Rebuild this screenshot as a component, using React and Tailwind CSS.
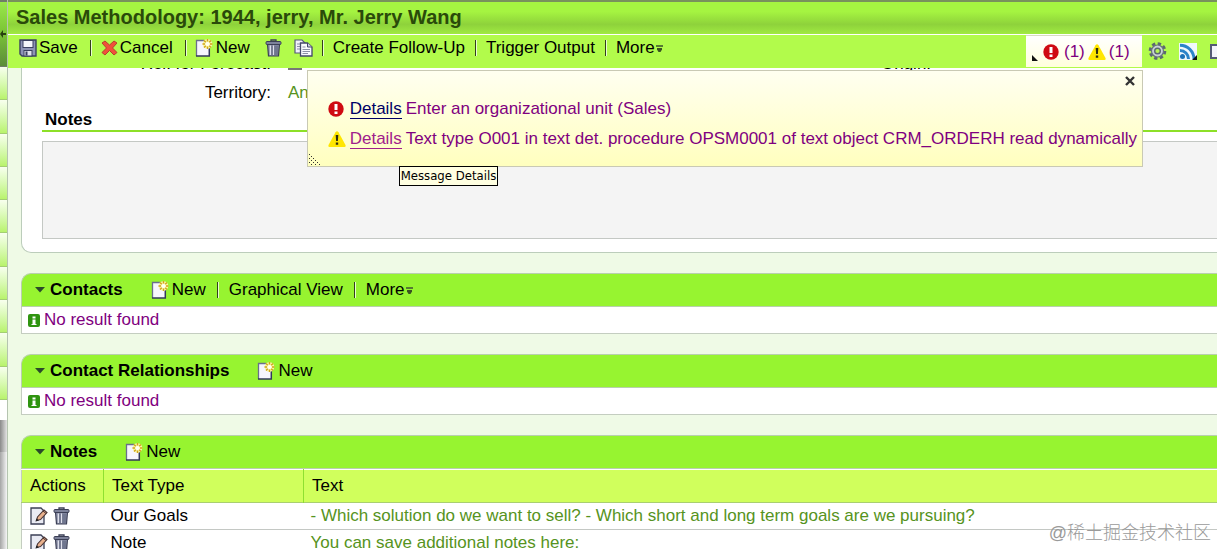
const SaveIcon = () => (
  <svg width="18" height="18" viewBox="0 0 18 18" aria-hidden="true">
    <path d="M1 1h16v16H3l-2-2z" fill="#8d93b5" stroke="#3b4160" strokeWidth="1.4" />
    <rect x="4" y="1.5" width="10" height="7" fill="#f4f5fa" stroke="#3b4160" />
    <rect x="5" y="11.5" width="8" height="5.5" fill="#e2e4ee" stroke="#3b4160" />
    <rect x="6.5" y="12.5" width="2" height="4" fill="#3b4160" />
  </svg>
);

const CancelIcon = () => (
  <svg width="17" height="16" viewBox="0 0 17 16" aria-hidden="true">
    <path
      d="M1 3l3-2 4.5 4L13 1l3 2-4.5 5 4.5 4.5-3 2.5-4.500-4.500L4 15l-3-2.500L5.500 8z"
      fill="#f0513b"
      stroke="#b8402c"
      strokeWidth="1"
      strokeLinejoin="round"
    />
  </svg>
);

const NewIcon = () => (
  <svg width="18" height="18" viewBox="0 0 18 18" aria-hidden="true">
    <path d="M1.5 1.5h13V17h-13z" fill="#f6f6fd" />
    <path d="M9 1.5H1.5V17" fill="none" stroke="#6a6f8c" strokeWidth="1.3" />
    <path d="M14.300 9v8H1" fill="none" stroke="#33385a" strokeWidth="1.500" />
    <circle cx="12.500" cy="5" r="4.800" fill="#f7f7a8" />
    <path
      d="M12.500 0v2.500M12.500 7.500V10M7.500 5H10M15 5h2.500M9 1.500l1.800 1.800M14.200 6.700L16 8.500M16 1.500l-1.800 1.800M10.800 6.700L9 8.500"
      stroke="#d2a41a"
      strokeWidth="1.400"
    />
    <circle cx="12.500" cy="5" r="2" fill="#fffff0" />
  </svg>
);

const TrashIcon = () => (
  <svg width="17" height="18" viewBox="0 0 17 18" aria-hidden="true">
    <path d="M6 2.500V1h5v1.500" fill="none" stroke="#3b3f55" strokeWidth="1.300" />
    <path d="M2.500 5h12l-1 12h-10z" fill="#8e93ab" stroke="#3b3f55" strokeWidth="1.200" />
    <path d="M5.500 6.500v9.500M8.500 6.500v9.500" stroke="#dfe1ec" strokeWidth="1.400" />
    <path d="M7 6.500v9.500M10 6.500v9.500M12 6.500v9.500" stroke="#596079" strokeWidth="1.100" />
    <rect x="1" y="2.500" width="15" height="3" rx="1" fill="#7d829a" stroke="#3b3f55" />
  </svg>
);

const CopyIcon = () => (
  <svg width="19" height="18" viewBox="0 0 19 18" aria-hidden="true">
    <path d="M1 1h7l3 3v10H1z" fill="#f2f2fa" stroke="#55597a" strokeWidth="1.200" />
    <path d="M3 5h3M3 7.500h3M3 10h3" stroke="#8d91a8" />
    <path d="M6.500 4h7L18 8v9H6.500z" fill="#fafaff" stroke="#44486a" strokeWidth="1.300" />
    <path d="M13.500 4v4H18" fill="#d0d2e2" stroke="#44486a" />
    <path d="M8.500 8h3M8.500 10.500H16M8.500 12.500H16M8.500 14.500H14" stroke="#8d91a8" />
  </svg>
);

const EditIcon = () => (
  <svg width="18" height="18" viewBox="0 0 18 18" aria-hidden="true">
    <path d="M1 1h10l3 3v13H1z" fill="#e9eaf3" stroke="#3b3f55" strokeWidth="1.300" />
    <path d="M6.500 13.500l1-3.500L14 3l3 2.500-6.500 7z" fill="#e8b08c" stroke="#4a3434" strokeWidth="1.100" />
    <path d="M13 4l3 2.500" stroke="#4a3434" />
    <path d="M5.500 14.500l1-3 2.500 2z" fill="#222" />
  </svg>
);

const ErrorIcon = () => (
  <svg width="16" height="16" viewBox="0 0 16 16" aria-hidden="true">
    <circle cx="8" cy="8" r="7.700" fill="#cf0a12" />
    <path d="M6.500 3h3v6h-3zM6.500 10.500h3v2.500h-3z" fill="#fff" />
  </svg>
);

const WarningIcon = () => (
  <svg width="18" height="16" viewBox="0 0 18 16" aria-hidden="true">
    <path d="M7.500 1.200Q9-.8 10.500 1.200L17.500 14Q18 16 16.500 16h-15Q0 16 .5 14z" fill="#ffe600" />
    <path d="M7.700 4h2.600l-.4 6H8.100zM7.800 11.500h2.400v2.300H7.800z" fill="#2e2c10" />
  </svg>
);

const InfoIcon = () => (
  <svg width="12" height="13" viewBox="0 0 12 13" aria-hidden="true">
    <rect width="12" height="13" rx="2" fill="#2f9410" />
    <path d="M4.500 2.500h3v2h-3zM4.500 5.500h3V10h1v1h-5v-1h1z" fill="#fff" />
  </svg>
);

const GearIcon = () => (
  <svg width="19" height="18" viewBox="0 0 19 18" aria-hidden="true">
    <circle cx="9.500" cy="9" r="7.300" fill="none" stroke="#5b6770" strokeWidth="3" strokeDasharray="3.300 2.430" />
    <circle cx="9.500" cy="9" r="6" fill="#c8d0d5" stroke="#66727a" strokeWidth="1.200" />
    <circle cx="9.500" cy="9" r="2.800" fill="#b5f556" stroke="#5b6770" strokeWidth="1.400" />
  </svg>
);

const FeedIcon = () => (
  <svg width="18" height="17" viewBox="0 0 18 17" aria-hidden="true">
    <rect width="18" height="17" fill="#f1f8fb" />
    <circle cx="3.500" cy="13.500" r="2.500" fill="#1c72b8" />
    <path d="M1 7.500a8.500 8.500 0 0 1 8.500 8.500M1 2.200a14 14 0 0 1 14 13.800" fill="none" stroke="#2b84c9" strokeWidth="3" />
    <path d="M18 12v5h-5z" fill="#111" />
  </svg>
);

const MoreArrow = () => (
  <svg width="7" height="7" viewBox="0 0 7 7" aria-hidden="true">
    <path d="M0 0h7v2H0z" fill="#567a33" />
    <path d="M1 3h5v1.500L4.500 7h-2L1 4.500z" fill="#3a5222" />
  </svg>
);

const Separator = () => <span className="h-4 w-px shrink-0 bg-[#33401c] shadow-[1px_0_0_#e8ffd0]" />;

const tabs = [1, 2, 3, 4, 5, 6, 7, 8, 9, 10];

const notes = [
  {
    type: "Our Goals",
    text: "- Which solution do we want to sell? - Which short and long term goals are we pursuing?",
  },
  { type: "Note", text: "You can save additional notes here:" },
];

const SideRail = () => (
  <aside className="flex w-2 shrink-0 flex-col border-r border-[#b5c4b0] bg-white">
    <div className="flex h-[67px] shrink-0 items-center border-t-2 border-b border-[#6f7d68] bg-linear-to-b from-[#9ae84a] via-[#79c234] to-[#5c8c3a]">
      <svg width="6" height="8" viewBox="0 0 6 8" aria-hidden="true">
        <path d="M0 4l3-4v3h3v2H3v3z" fill="#26400f" />
      </svg>
    </div>
    <div className="flex h-[333px] shrink-0 flex-col">
      {tabs.map((tab) => (
        <div key={tab} className="grow border-b border-[#a3cf72] bg-linear-to-b from-[#f8ffee] to-[#b9f36c]" />
      ))}
    </div>
    <div className="mt-5 h-8 bg-linear-to-r from-[#8a8a8a] to-[#e4e4e4]" />
    <div className="grow bg-linear-to-r from-[#a5a5a5] to-[#f6f6f6]" />
  </aside>
);

const MessagePopup = () => (
  <div
    role="dialog"
    aria-label="Messages"
    className="absolute top-full -right-px z-10 mt-[3px] h-[97px] border border-[#c9c9b4] bg-linear-to-b from-[#fffff0] to-[#ffffbe] pt-[23px] pr-[5px] pl-5 whitespace-nowrap"
  >
    <button type="button" aria-label="Close" className="absolute top-[5px] right-[7px]">
      <svg width="10" height="10" viewBox="0 0 10 10" aria-hidden="true">
        <path d="M1 1l8 8M9 1L1 9" stroke="#333" strokeWidth="2.400" />
      </svg>
    </button>
    <ul className="text-[#800080]">
      <li className="flex h-[30px] items-center">
        <span className="flex w-[22px]">
          <ErrorIcon />
        </span>
        <a href="#error" className="mr-1 border-b border-[#000066] leading-[18px] text-[#000066]">
          Details
        </a>
        Enter an organizational unit (Sales)
      </li>
      <li className="flex h-[30px] items-center">
        <span className="flex w-[22px]">
          <WarningIcon />
        </span>
        <a href="#warning" className="mr-1 border-b border-[#a0208c] leading-[18px] text-[#a0208c]">
          Details
        </a>
        Text type O001 in text det. procedure OPSM0001 of text object CRM_ORDERH read dynamically
      </li>
    </ul>
    <svg className="absolute bottom-0 left-0" width="12" height="12" viewBox="0 0 12 12" aria-hidden="true">
      <path
        d="M1 0h1v1H1zM3 2h1v1H3zM1 4h1v1H1zM5 4h1v1H5zM3 6h1v1H3zM7 6h1v1H7zM1 8h1v1H1zM5 8h1v1H5zM9 8h1v1H9zM3 10h1v1H3zM7 10h1v1H7zM11 10h1v1h-1z"
        fill="#333"
      />
    </svg>
    <div
      role="tooltip"
      className="absolute top-full left-[91px] h-5 border border-black bg-[#ffffe1] px-px font-['DejaVu_Sans_Condensed','Noto_Sans',sans-serif] text-[13px] leading-[18px] text-black"
    >
      Message Details
    </div>
  </div>
);

const Toolbar = () => (
  <div className="flex h-[34px] shrink-0 justify-between border-t border-white bg-[#b2fb4b]">
    <nav className="flex h-[26px] items-center pl-[11px]">
      <button type="button" className="mr-3 flex items-center gap-0.5">
        <SaveIcon />
        Save
      </button>
      <Separator />
      <button type="button" className="mr-3 ml-[10px] flex items-center gap-0.5">
        <CancelIcon />
        Cancel
      </button>
      <Separator />
      <button type="button" className="ml-[9px] flex items-center gap-[3px]">
        <NewIcon />
        New
      </button>
      <button type="button" aria-label="Delete" className="ml-[15px]">
        <TrashIcon />
      </button>
      <button type="button" aria-label="Copy" className="mr-[9px] ml-3">
        <CopyIcon />
      </button>
      <Separator />
      <button type="button" className="mx-[10px]">
        Create Follow-Up
      </button>
      <Separator />
      <button type="button" className="mx-[10px]">
        Trigger Output
      </button>
      <Separator />
      <button type="button" className="ml-[10px] flex items-center gap-px">
        More
        <MoreArrow />
      </button>
    </nav>
    <div className="flex shrink-0">
      <div className="relative h-8">
        <button
          type="button"
          className="flex h-8 w-[116px] items-center border-t border-[#d8dcc0] bg-linear-to-b from-white to-[#ffffdc] pl-[6px] text-[#800080]"
        >
          <svg className="mt-3 mr-[5px]" width="6" height="6" viewBox="0 0 6 6" aria-hidden="true">
            <path d="M0 0l6 6H0z" fill="#111" />
          </svg>
          <ErrorIcon />
          <span className="mr-[3px] ml-[5px]">(1)</span>
          <WarningIcon />
          <span className="ml-[3px]">(1)</span>
        </button>
        <MessagePopup />
      </div>
      <div className="flex h-8 w-[75px] items-center overflow-hidden pl-[6px]">
        <button type="button" aria-label="Personalize" className="mr-3 shrink-0">
          <GearIcon />
        </button>
        <button type="button" aria-label="Feed" className="mr-[13px] shrink-0">
          <FeedIcon />
        </button>
        <button
          type="button"
          aria-label="Open window"
          className="h-[15px] w-4 shrink-0 border-2 border-[#555a75] bg-[#f4f4fa]"
        />
      </div>
    </div>
  </div>
);

const NewButton = () => (
  <button type="button" className="flex items-center gap-[3px]">
    <NewIcon />
    New
  </button>
);

const Panel = ({ title, actions, children }) => (
  <section className="mt-5">
    <header className="flex h-[34px] items-center gap-7 rounded-tl-[10px] border-y border-l border-[#b9cfae] bg-[#97f430] pl-3">
      <h2 className="flex items-center gap-1 font-bold">
        <svg width="12" height="6" viewBox="0 0 12 6" aria-hidden="true">
          <path d="M1 0h10L6 5.500z" fill="#2b4a2a" />
        </svg>
        {title}
      </h2>
      {actions}
    </header>
    {children}
  </section>
);

const NoResult = () => (
  <p className="flex h-[27px] items-center gap-1 border-b border-l border-[#c4cdc0] bg-white pl-[6px] text-[#800080]">
    <InfoIcon />
    No result found
  </p>
);

const NotesTable = () => (
  <table className="w-full table-fixed border-collapse border-l border-[#c4cdc0] bg-white">
    <thead>
      <tr className="h-[33px] border-t border-b border-t-white border-b-[#a9cf70] bg-[#d0ff5c] text-left">
        <th className="w-[82px] border-r border-[#8fe030] pl-2 font-normal">Actions</th>
        <th className="w-[200px] border-r border-[#8fe030] pl-2 font-normal">Text Type</th>
        <th className="pl-2 font-normal">Text</th>
      </tr>
    </thead>
    <tbody>
      {notes.map((note) => (
        <tr key={note.type} className="h-[27px] border-b border-[#c4c8c4]">
          <td className="pl-2">
            <div className="flex gap-[5px]">
              <button type="button" aria-label={`Edit ${note.type}`}>
                <EditIcon />
              </button>
              <button type="button" aria-label={`Delete ${note.type}`}>
                <TrashIcon />
              </button>
            </div>
          </td>
          <td className="pl-[7px]">{note.type}</td>
          <td className="pl-[7px] whitespace-nowrap text-[#569321]">{note.text}</td>
        </tr>
      ))}
    </tbody>
  </table>
);

const DetailsForm = () => (
  <section className="rounded-bl-[10px] border-b border-l border-[#bccdbb] bg-white pb-[13px] pl-5">
    <div className="flex h-[10px] items-start overflow-hidden">
      <label htmlFor="forecast" className="-mt-[13px] w-[229px] text-right leading-[18px]">
        Rel. for Forecast:
      </label>
      <input
        id="forecast"
        type="checkbox"
        className="-mt-3 ml-[17px] h-[14px] w-[14px] appearance-none border-2 border-[#777] bg-[#ddd]"
      />
      <span className="-mt-[13px] ml-auto w-[336px] leading-[18px]">Origin:</span>
    </div>
    <div className="flex h-[30px] items-center">
      <span className="w-[229px] text-right">Territory:</span>
      <span className="ml-[17px] text-[#569321]">An</span>
    </div>
    <h2 className="h-6 border-b-2 border-[#8de028] pl-[3px] font-bold leading-6">
      <label htmlFor="notes">Notes</label>
    </h2>
    <textarea
      id="notes"
      readOnly
      className="mt-[9px] block h-[98px] w-full resize-none border border-r-0 border-[#c4c8c4] bg-[#f4f4f4]"
    />
  </section>
);

const App = () => {
  return (
    <div className="flex h-screen overflow-hidden bg-white font-['Liberation_Sans',Arial,sans-serif] text-[17px] leading-5 text-black">
      <SideRail />
      <div className="relative flex min-w-0 grow flex-col">
        <h1 className="h-[34px] shrink-0 border-t-2 border-[#78915c] bg-linear-to-b from-[#a5f441] from-30% via-[#8ed23b] via-70% to-[#a0ea42] pl-2 text-xl leading-[31px] font-bold text-[#2a4a0a]">
          Sales Methodology: 1944, jerry, Mr. Jerry Wang
        </h1>
        <Toolbar />
        <main className="min-h-0 grow overflow-hidden bg-[#effae6] pl-[13px]">
          <DetailsForm />
          <Panel
            title="Contacts"
            actions={
              <div className="flex items-center gap-[11px]">
                <NewButton />
                <Separator />
                <button type="button">Graphical View</button>
                <Separator />
                <button type="button" className="flex items-center gap-px">
                  More
                  <MoreArrow />
                </button>
              </div>
            }
          >
            <NoResult />
          </Panel>
          <Panel title="Contact Relationships" actions={<NewButton />}>
            <NoResult />
          </Panel>
          <Panel title="Notes" actions={<NewButton />}>
            <NotesTable />
          </Panel>
        </main>
        <p className="absolute right-[6px] bottom-1 font-['Liberation_Sans','Noto_Sans_CJK_SC',sans-serif] text-lg leading-6 font-light text-[#9a9a9a]">
          @稀土掘金技术社区
        </p>
      </div>
    </div>
  );
};

export default App;
